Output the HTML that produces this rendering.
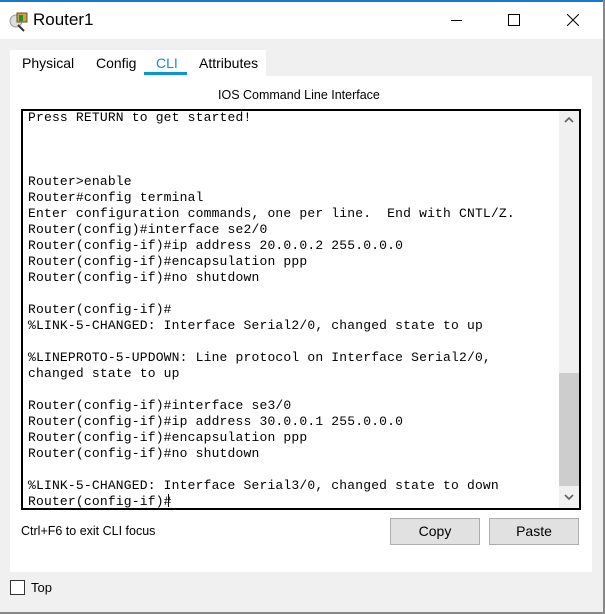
<!DOCTYPE html>
<html><head><style>
body{margin:0;width:605px;height:614px;overflow:hidden;background:#f0f0f0;font-family:"Liberation Sans",sans-serif;position:relative}
.a{position:absolute}
pre{margin:0;font-family:"Liberation Mono",monospace;font-size:13px;letter-spacing:0.18px;line-height:16px;color:#000}
</style></head><body>
<div class="a" style="left:0;top:0;width:605px;height:2px;background:#1979ca"></div>
<div class="a" style="left:0;top:2px;width:603px;height:37px;background:#fff"></div>
<div class="a" style="left:603px;top:0;width:2px;height:614px;background:#888"></div>
<div class="a" style="left:0;top:612px;width:605px;height:2px;background:#888"></div>
<svg class="a" style="left:8px;top:10px" width="22" height="22" viewBox="0 0 22 22">
<circle cx="8" cy="11" r="6" fill="#ddd" stroke="#999"/><line x1="10" y1="15" x2="16" y2="21" stroke="#333" stroke-width="2"/>
<rect x="9" y="3" width="10" height="9" fill="#c8a24a" stroke="#6a5020"/><rect x="11" y="5" width="4" height="6" fill="#2a8a2a"/></svg>
<div class="a" style="left:33px;top:10px;font-size:17px">Router1</div>
<div class="a" style="left:451px;top:20px;width:11px;height:1px;background:#000"></div>
<div class="a" style="left:508px;top:14px;width:10px;height:10px;border:1px solid #000"></div>
<svg class="a" style="left:567px;top:14px" width="12" height="12"><path d="M0 0L12 12M12 0L0 12" stroke="#000"/></svg>
<div class="a" style="left:10px;top:50px;width:256px;height:30px;background:#fff"></div>
<div class="a" style="left:10px;top:76px;width:582px;height:496px;background:#fff"></div>
<div class="a" style="left:22px;top:55px;font-size:14px">Physical</div>
<div class="a" style="left:96px;top:55px;font-size:14px">Config</div>
<div class="a" style="left:156px;top:55px;font-size:14px;color:#1a8fd0">CLI</div>
<div class="a" style="left:144px;top:72px;width:43px;height:3px;background:#0a96d0"></div>
<div class="a" style="left:199px;top:55px;font-size:14px">Attributes</div>
<div class="a" style="left:218px;top:88px;font-size:12.5px">IOS Command Line Interface</div>
<div class="a" style="left:21px;top:109px;width:556px;height:397px;border:2px solid #000;background:#fff;overflow:hidden">
<pre style="position:absolute;left:5px;top:-1px">Press RETURN to get started!



Router&gt;enable
Router#config terminal
Enter configuration commands, one per line.  End with CNTL/Z.
Router(config)#interface se2/0
Router(config-if)#ip address 20.0.0.2 255.0.0.0
Router(config-if)#encapsulation ppp
Router(config-if)#no shutdown

Router(config-if)#
%LINK-5-CHANGED: Interface Serial2/0, changed state to up

%LINEPROTO-5-UPDOWN: Line protocol on Interface Serial2/0,
changed state to up

Router(config-if)#interface se3/0
Router(config-if)#ip address 30.0.0.1 255.0.0.0
Router(config-if)#encapsulation ppp
Router(config-if)#no shutdown

%LINK-5-CHANGED: Interface Serial3/0, changed state to down
Router(config-if)#</pre>
<div style="position:absolute;left:145px;top:383px;width:1px;height:13px;background:#000"></div>
<div style="position:absolute;left:536px;top:0;width:20px;height:397px;background:#f0f0f0"></div>
<div style="position:absolute;left:536px;top:262px;width:20px;height:113px;background:#cdcdcd"></div>
<svg style="position:absolute;left:541px;top:5px" width="10" height="8"><path d="M1 6L5 2L9 6" stroke="#606060" stroke-width="1.6" fill="none"/></svg>
<svg style="position:absolute;left:541px;top:382px" width="10" height="8"><path d="M1 2L5 6L9 2" stroke="#606060" stroke-width="1.6" fill="none"/></svg>
</div>
<div class="a" style="left:21px;top:524px;font-size:12.5px">Ctrl+F6 to exit CLI focus</div>
<div class="a" style="left:390px;top:518px;width:88px;height:25px;border:1px solid #adadad;background:#e1e1e1;font-size:14px;text-align:center;line-height:25px">Copy</div>
<div class="a" style="left:489px;top:518px;width:88px;height:25px;border:1px solid #adadad;background:#e1e1e1;font-size:14px;text-align:center;line-height:25px">Paste</div>
<div class="a" style="left:10px;top:580px;width:13px;height:13px;border:1px solid #333;background:#fff"></div>
<div class="a" style="left:31px;top:580px;font-size:13px">Top</div>
</body></html>
